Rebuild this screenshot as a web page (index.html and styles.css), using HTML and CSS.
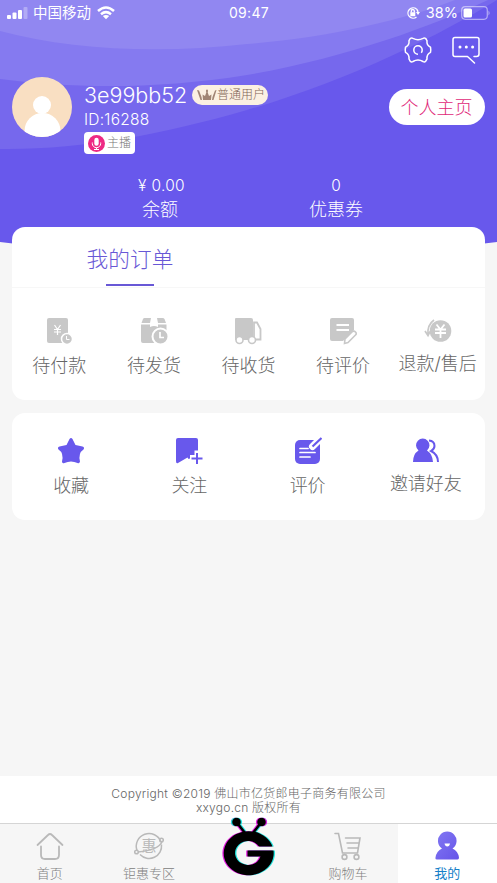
FILE: index.html
```html
<!DOCTYPE html>
<html lang="zh-CN">
<head>
<meta charset="utf-8">
<meta name="viewport" content="width=device-width, initial-scale=1">
<title>我的</title>
<link rel="stylesheet" href="styles.css">
</head>
<body>
<div class="app">
  <header class="hero">
    <svg class="hero-bg" viewBox="0 0 497 250" aria-hidden="true">
      <path fill="#6858ec" d="M0 0H497V242Q485 243.500 470 245H27Q12 243.500 0 242Z"/>
      <path fill="#7668ed" d="M0 0H497C440 35 350 80 247 110C160 135 80 150 0 149Z"/>
      <path fill="#857af0" d="M0 0H488C430 27 345 58 247 75C160 89 75 89 0 79Z"/>
      <path fill="#9187f1" d="M0 0H455C405 20 325 38 247 44C160 54 70 50 0 31Z"/>
    </svg>
    <div class="status">
      <div class="status-left">
        <svg width="21" height="12" viewBox="0 0 21 12" fill="#fff"><rect y="8" width="4" height="4" rx="1"/><rect x="5.500" y="5.500" width="4" height="6.500" rx="1"/><rect x="11" y="3" width="4" height="9" rx="1"/><rect x="16.500" width="4" height="12" rx="1" opacity=".3"/></svg>
        <span class="carrier">中国移动</span>
        <svg width="18" height="14" viewBox="0 0 18 14" fill="none" stroke="#fff" stroke-width="2.500"><path d="M1 5Q9-2 17 5M4 8.200Q9 4 14 8.200"/><path fill="#fff" stroke="none" d="M5.800 10Q9 7.800 12.200 10L9 13.200Z"/></svg>
      </div>
      <div class="clock">09:47</div>
      <div class="status-right">
        <svg width="14" height="14" viewBox="0 0 14 14" fill="none" stroke="#fff" stroke-width="1.300"><path d="M10.500 3A5.200 5.200 0 1 0 10.500 11"/><path d="M10.500 3Q12 4.500 12 6.500"/><path fill="#fff" stroke="none" d="M10 6h4l-2 3zM4.300 6.200h5v4h-5z"/><path d="M5.300 6.500V5a1.500 1.500 0 0 1 3 0v1.500"/></svg>
        <span class="percent">38%</span>
        <svg width="30" height="14" viewBox="0 0 30 14"><rect x=".7" y=".7" width="25.600" height="12.600" rx="3.500" fill="none" stroke="#fff" stroke-opacity=".5" stroke-width="1.200"/><rect x="2.500" y="2.500" width="8.500" height="9" rx="1.500" fill="#fff"/><path fill="#fff" fill-opacity=".5" d="M27.500 4.500q2.200 2.500 0 5z"/></svg>
      </div>
    </div>
    <div class="tools">
      <svg width="28" height="28" viewBox="0 0 28 28" fill="none" stroke="#fff" stroke-width="1.500" stroke-linejoin="round"><path d="M6.200 2.500Q7.500 1.400 9 2.300Q14 5 19 2.300Q20.500 1.400 21.700 2.500L23 4.700Q22.400 9.500 26.500 11.200Q27 14 26.500 16.400Q22.500 18.300 23 23L21.700 25.200Q20.500 26.500 19 25.500Q14 22.500 9 25.500Q7.500 26.500 6.200 25.200L5 23Q5.500 18.300 1.500 16.400Q1 14 1.500 11.200Q5.600 9.500 5 4.700Z"/><path d="M14 18.200A4.200 4.200 0 1 1 18.200 14Q18.200 15.500 17.300 16.700"/></svg>
      <svg width="28" height="28" viewBox="0 0 28 28" fill="none" stroke="#fff" stroke-width="1.500" stroke-linecap="round" stroke-linejoin="round"><path d="M22 20.500h2.500q2.500 0 2.500-2.500V3.500q0-2-2-2H3q-2 0-2 2V18.500q0 2 2 2H15.500L22.500 27"/><g fill="#fff" stroke="none"><circle cx="8" cy="11" r="1.500"/><circle cx="14.300" cy="11" r="1.500"/><circle cx="20.600" cy="11" r="1.500"/></g></svg>
    </div>
    <div class="profile">
      <svg class="avatar" viewBox="0 0 60 60"><defs><clipPath id="av"><circle cx="30" cy="30" r="30"/></clipPath></defs><g clip-path="url(#av)"><path fill="#f9dfc2" d="M0 0h60v60H0z"/><ellipse cx="30.500" cy="54" rx="18" ry="18" fill="#fff"/><circle cx="30" cy="28" r="9" fill="#fff"/></g></svg>
      <div class="identity">
        <div class="name-row">
          <span class="name">3e99bb52</span>
          <span class="level"><svg width="20" height="12" viewBox="0 0 20 12"><path fill="#a08474" d="M0 1L2 1.500L4.500 8L5 11H3.500ZM19.500 1L18 1.500L15.500 8L15 11H16.500ZM5.500 5.500L8 7L9.300 3.500Q8.500 .5 10 .5Q11.500 .5 10.700 3.500L12 7L14.500 5.500L14 11H6Z"/></svg>普通用户</span>
        </div>
        <div class="uid">ID:16288</div>
        <div class="anchor"><svg width="17" height="17" viewBox="0 0 17 17"><circle cx="8.500" cy="8.500" r="8.500" fill="#ee2a83"/><rect x="6.300" y="2.800" width="4.400" height="8" rx="2.200" fill="#fff"/><path fill="none" stroke="#fff" d="M4.300 7.500v1a4.200 4.200 0 0 0 8.400 0v-1M8.500 12.700v2M6 14.500h5"/></svg><span>主播</span></div>
      </div>
      <div class="homepage">个人主页</div>
    </div>
    <div class="stats">
      <div class="stat balance"><span class="value">¥ 0.00</span><span class="label">余额</span></div>
      <div class="stat"><span class="value">0</span><span class="label">优惠券</span></div>
    </div>
  </header>

  <main class="content">
    <section class="card orders">
      <div class="card-head"><div class="card-title">我的订单</div></div>
      <div class="grid five">
        <div class="item">
          <svg width="28" height="28" viewBox="0 0 28 28"><rect x="2" y="1" width="21" height="25" rx="2" fill="#c8c8c8"/><path d="M9.500 8l3 4.500L15.500 8M9 12.500h7M9 15h7M12.500 12.500V18" fill="none" stroke="#fff" stroke-width="1.200"/><circle cx="22" cy="22" r="5.500" fill="#c8c8c8" stroke="#fff" stroke-width="1.500"/><path d="M21.500 19v3.500h3" fill="none" stroke="#fff"/></svg>
          <span>待付款</span></div>
        <div class="item">
          <svg width="28" height="28" viewBox="0 0 28 28"><path fill="#c8c8c8" d="M4.500 1H11L10 6H1.500L3 2Q3.500 1 4.500 1ZM17 1H22.500Q24 1 24.500 2L26 6H18ZM1 7.500H10V10Q14 8 18 10V7.500H26.500V26H3Q1 26 1 24Z"/><circle cx="20.500" cy="19.500" r="8" fill="#c8c8c8" stroke="#fff" stroke-width="2"/><path d="M20 15v5.500h4" fill="none" stroke="#fff" stroke-width="1.700"/></svg>
          <span>待发货</span></div>
        <div class="item">
          <svg width="28" height="28" viewBox="0 0 28 28"><path fill="#c8c8c8" d="M2 1H17Q19 1 19 3V23H1V2Q1 1 2 1Z"/><path fill="none" stroke="#c8c8c8" stroke-width="1.800" d="M20 5.500H23L26.500 12V22.500H20Z"/><g fill="#fff" stroke="#c8c8c8" stroke-width="1.600"><circle cx="5.500" cy="23" r="3.500"/><circle cx="18" cy="23" r="3.500"/></g></svg>
          <span>待收货</span></div>
        <div class="item">
          <svg width="28" height="28" viewBox="0 0 28 28"><path fill="#c8c8c8" d="M3 1H23Q25 1 25 3V13L14 24H3Q1 24 1 22V3Q1 1 3 1Z"/><path stroke="#fff" stroke-width="1.800" d="M7.500 8H20M7.500 13H20"/><path d="M16 22L23.500 14.500Q25 13.500 26.500 15Q28 16.500 26.500 18L19 25.500L15.500 26.500Z" fill="#fff" stroke="#c8c8c8" stroke-width="1.600"/></svg>
          <span>待评价</span></div>
        <div class="item raised">
          <svg width="28" height="28" viewBox="0 0 28 28"><circle cx="16.500" cy="14" r="10.800" fill="#c8c8c8"/><path d="M12.500 7.500l4 5 4-5M11 12.500h11M11 16h11M16.500 12.500V21" fill="none" stroke="#fff" stroke-width="1.800"/><path d="M10 3Q3 8 4 18M1 14L4 18.500L6 14.500" fill="none" stroke="#c8c8c8" stroke-width="1.700"/></svg>
          <span>退款/售后</span></div>
      </div>
    </section>

    <section class="card services">
      <div class="grid four">
        <div class="item">
          <svg width="28" height="28" viewBox="0 0 28 28"><path fill="#6858ec" d="M12.500 2Q14 0 15.500 2L18.500 8L25.500 9.500Q28 10.500 26.500 12.500Q21 16 23 24.500Q22.500 27 20.500 26Q14 23 7.500 26Q5 27 5 24.500Q7 16 1.500 12.500Q0 10.500 2.500 9.500L9.500 8Z"/></svg>
          <span>收藏</span></div>
        <div class="item">
          <svg width="28" height="28" viewBox="0 0 28 28"><path fill="#6858ec" d="M3 1H21Q23 1 23 3V13.500H19.500V18H15V21.500L13.500 22L12.500 20.500L3 26Q1 27 1 24V3Q1 1 3 1Z"/><path stroke="#6858ec" stroke-width="2" d="M22 16V27M16.500 21.500H27.500"/></svg>
          <span>关注</span></div>
        <div class="item">
          <svg width="28" height="28" viewBox="0 0 28 28"><rect x="1" y="3" width="25" height="24" rx="5" fill="#6858ec"/><path d="M6 11.500h8M6 15.500h15M6 20h10" stroke="#fff" stroke-width="1.700" stroke-linecap="round"/><path d="M18.500 9.500L28 0" stroke="#fff" stroke-width="7" stroke-linecap="round"/><path d="M18.500 9.500L27.500 1" stroke="#6858ec" stroke-width="2.200"/></svg>
          <span>评价</span></div>
        <div class="item raised">
          <svg width="28" height="28" viewBox="0 0 28 28"><path fill="#6858ec" d="M6.500 13.500A6.700 6.700 0 1 1 15 13.500Q20.500 17 21 25H1Q1 17 6.500 13.500Z"/><path fill="none" stroke="#6858ec" stroke-width="2" d="M17 3.500Q22.500 4 22.500 9Q22.500 12 19 14Q26 17.500 26 25"/></svg>
          <span>邀请好友</span></div>
      </div>
    </section>
  </main>

  <div class="copyright"><div>Copyright ©2019 佛山市亿货郎电子商务有限公司</div><div>xxygo.cn 版权所有</div></div>

  <nav class="tabbar">
    <div class="tab"><svg width="30" height="30" viewBox="0 0 30 30" fill="none" stroke="#b9b9b9" stroke-width="1.800" stroke-linecap="round" stroke-linejoin="round"><path d="M2.500 14L13 4Q15 2 17 4L27.500 14M6 15.500V24q0 4 4 4H20q4 0 4-4V15.500"/></svg><span>首页</span></div>
    <div class="tab"><svg width="30" height="30" viewBox="0 0 30 30" fill="none" stroke="#b9b9b9" stroke-width="1.500"><path d="M3 19.500A12.500 12.500 0 1 1 27 11M27.500 13.500A12.500 12.500 0 0 1 6 23.500"/><circle cx="27.500" cy="9" r="1.800"/><circle cx="2.500" cy="21" r="1.800"/><path d="M28 11Q24 19 4 21"/><text class="hui" x="7.500" y="19.500">惠</text></svg><span>钜惠专区</span></div>
    <div class="tab center">
      <svg class="logo" width="60" height="64" viewBox="0 0 60 64"><defs><g id="mark" fill="currentColor"><path fill-rule="evenodd" d="M53.500 30.500A25 22 0 1 0 54.500 34.500H28.500V40.500H41.500A13 12 0 1 1 40 30.500Z"/><path fill="none" stroke="currentColor" stroke-width="2.500" d="M17.500 6L26 17M42.500 6L34 17"/><circle cx="17.500" cy="6" r="4.300"/><circle cx="42.500" cy="6" r="4.300"/></g></defs><use class="cyan" href="#mark" x="1.300"/><use class="magenta" href="#mark" x="-1.300"/><circle class="cyan-dot" cx="16.200" cy="6" r="4.300"/><circle class="magenta-dot" cx="43.800" cy="6" r="4.300"/><use class="black" href="#mark"/><path class="gap" d="M40 31.200H57v2.500H40z"/></svg>
    </div>
    <div class="tab"><svg width="30" height="30" viewBox="0 0 30 30" fill="none" stroke="#b9b9b9" stroke-width="1.600" stroke-linecap="round"><path d="M2 2.500H5.500L9.500 22H24.500L27 7H12.500M14 12H25.500M15 17H24.500"/><circle cx="11.500" cy="26" r="2.400"/><circle cx="23.500" cy="26" r="2.400"/></svg><span>购物车</span></div>
    <div class="tab active"><svg width="30" height="30" viewBox="0 0 30 30"><defs><linearGradient id="me" x2="1" y2="1"><stop stop-color="#8278f3"/><stop offset="1" stop-color="#6654e8"/></linearGradient></defs><path fill="url(#me)" d="M10 17.500A9.300 9.300 0 1 1 20.500 17.500Q26 20 27 26.500Q27 28.500 25.500 28.500H5Q3 28.500 3.500 26.500Q4.500 20 10 17.500Z"/><path fill="#fff" d="M12.500 12.500h5.500q-.5 3-2.700 3t-2.800-3z"/></svg><span>我的</span></div>
  </nav>
</div>
</body>
</html>
```
FILE: styles.css
```css
* { box-sizing: border-box; }
body {
  margin: 0;
  background: #f6f6f6;
  font-family: Inter, "Noto Sans CJK SC", sans-serif;
  font-weight: 300;
  color: #666;
}
svg { display: block; flex: none; }
.app { height: 883px; display: flex; flex-direction: column; overflow: hidden; }

.hero { position: relative; height: 227px; flex: none; color: #fff; }
.hero-bg { position: absolute; top: 0; left: 0; width: 100%; height: 250px; z-index: -1; }

.status { display: grid; grid-template-columns: 1fr auto 1fr; align-items: center; height: 25px; padding: 0 6px 0 7px; font-size: 14px; font-weight: 400; line-height: 24px; }
.status-left { display: flex; align-items: center; gap: 5px; }
.status-left svg:last-child { margin-left: 1px; }
.carrier { font-size: 14.500px; }
.clock { letter-spacing: .3px; }
.status-right { display: flex; align-items: center; justify-content: flex-end; }
.status-right svg:first-child { margin-right: 6px; }
.percent { font-size: 14.500px; margin-right: 3px; }

.tools { display: flex; justify-content: flex-end; gap: 20px; height: 52px; padding: 11px 17px 0 0; }

.profile { display: flex; align-items: flex-start; height: 98px; padding: 0 12px; }
.avatar { width: 60px; height: 60px; }
.identity { flex: 1; margin-left: 12px; }
.name-row { display: flex; align-items: center; gap: 6px; height: 34px; padding-top: 2px; }
.name { width: 102px; font-size: 21.500px; white-space: nowrap; }
.level { display: flex; align-items: center; width: 76px; height: 20px; padding-left: 5px; border-radius: 10px; background: #fbf0e2; color: #826657; font-size: 12px; line-height: 22px; white-space: nowrap; }
.uid { height: 21px; font-size: 15.500px; line-height: 17px; letter-spacing: .25px; }
.anchor { display: flex; align-items: center; gap: 2px; width: 51px; height: 22px; padding-left: 4px; border-radius: 4px; background: #fff; color: #777; font-size: 12px; line-height: 24px; }
.homepage { width: 96px; height: 36px; margin-top: 12px; border-radius: 18px; background: #fff; color: #e02878; font-size: 18px; line-height: 38px; text-align: center; padding-right: 1px; }

.stats { display: flex; width: 352px; margin-left: 72px; text-align: center; }
.stat { flex: 1; display: flex; flex-direction: column; }
.value { height: 21px; font-size: 15.500px; line-height: 21px; }
.balance .value { padding-left: 3px; letter-spacing: .3px; }
.label { font-size: 18px; line-height: 28px; }

.content { flex: 1; padding: 0 12px; display: flex; flex-direction: column; gap: 13px; position: relative; }
.card { background: #fff; border-radius: 13px; }
.orders { height: 173px; }
.card-head { height: 61px; border-bottom: 1px solid #f7f7f7; display: flex; }
.card-title { width: 236px; height: 60px; display: flex; flex-direction: column; align-items: center; color: #6858d6; font-size: 21.700px; line-height: 64px; }
.card-title::after { content: ""; width: 48px; height: 2px; margin-top: -7px; background: #6858d6; }
.grid { display: grid; }
.five { grid-template-columns: repeat(5, 1fr); padding-top: 29px; }
.four { grid-template-columns: repeat(4, 1fr); padding-top: 24px; }
.item { display: flex; flex-direction: column; align-items: center; gap: 6px; font-size: 18px; line-height: 29px; white-space: nowrap; }
.item.raised { gap: 4px; }
.services { height: 107px; }

.copyright { height: 47px; padding-top: 11px; background: #fff; text-align: center; font-size: 12px; line-height: 14px; letter-spacing: .24px; }

.tabbar { display: flex; height: 60px; border-top: 1px solid #d5d5d5; background: #f6f6f6; color: #808080; }
.tab { flex: 1; display: flex; flex-direction: column; align-items: center; padding-top: 7px; font-size: 13px; line-height: 25px; white-space: nowrap; }
.tab.active { background: #fff; color: #1580c8; font-weight: 400; }
.tab.center { padding: 0; }
.logo { margin-top: -8px; }
.cyan { color: #20e5df; }
.magenta { color: #e51be2; }
.black { color: #000; }
.cyan-dot { fill: #20e5df; }
.magenta-dot { fill: #e51be2; }
.gap { fill: #f6f6f6; }
.hui { fill: #b9b9b9; stroke: none; font-size: 15px; font-weight: 400; }
```
